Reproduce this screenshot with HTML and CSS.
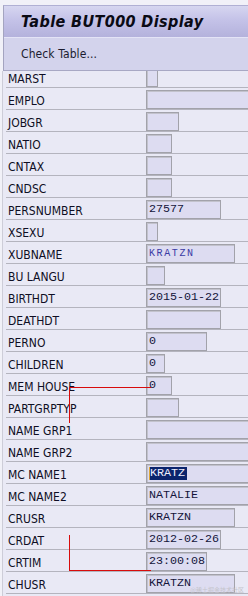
FILE: index.html
```html
<!DOCTYPE html>
<html>
  <head>
  <title>Table BUT000 Display</title>
  <link rel="stylesheet" href="styles.css">
</head>
  <body>
    <div class="screen">
      <div class="header">
        <div class="titlebar"><h1>Table BUT000 Display</h1></div>
        <div class="toolbar"><span class="tool">Check Table...</span></div>
      </div>

      <div class="form">
        <ul class="rows">
          <li class="row"><span class="label">MARST</span><span class="field w12"></span></li>
          <li class="row"><span class="label">EMPLO</span><span class="field wfull"></span></li>
          <li class="row"><span class="label">JOBGR</span><span class="field w33"></span></li>
          <li class="row"><span class="label">NATIO</span><span class="field w26"></span></li>
          <li class="row"><span class="label">CNTAX</span><span class="field w26"></span></li>
          <li class="row"><span class="label">CNDSC</span><span class="field w26"></span></li>
          <li class="row"><span class="label">PERSNUMBER</span><span class="field w75">27577</span></li>
          <li class="row"><span class="label">XSEXU</span><span class="field w12"></span></li>
          <li class="row"><span class="label">XUBNAME</span><span class="field w89 blue">KRATZN</span></li>
          <li class="row"><span class="label">BU LANGU</span><span class="field w19"></span></li>
          <li class="row"><span class="label">BIRTHDT</span><span class="field w75">2015-01-22</span></li>
          <li class="row"><span class="label">DEATHDT</span><span class="field w75"></span></li>
          <li class="row"><span class="label">PERNO</span><span class="field w61">0</span></li>
          <li class="row"><span class="label">CHILDREN</span><span class="field w19">0</span></li>
          <li class="row"><span class="label">MEM HOUSE</span><span class="field w26">0</span></li>
          <li class="row"><span class="label">PARTGRPTYP</span><span class="field w33"></span></li>
          <li class="row"><span class="label">NAME GRP1</span><span class="field wfull"></span></li>
          <li class="row"><span class="label">NAME GRP2</span><span class="field wfull"></span></li>
          <li class="row"><span class="label">MC NAME1</span><span class="field wfull"><span class="sel">KRATZ</span></span></li>
          <li class="row"><span class="label">MC NAME2</span><span class="field wfull">NATALIE</span></li>
          <li class="row"><span class="label">CRUSR</span><span class="field w89">KRATZN</span></li>
          <li class="row"><span class="label">CRDAT</span><span class="field w75">2012-02-26</span></li>
          <li class="row"><span class="label">CRTIM</span><span class="field w61">23:00:08</span></li>
          <li class="row"><span class="label">CHUSR</span><span class="field w89">KRATZN</span></li>
        </ul>
      </div>

      <!-- annotation lines drawn over the form -->
      <div class="mark mark-one"></div>
      <div class="mark mark-two"></div>
      <div class="watermark">@稀土掘金技术社区</div>
    </div>
  </body>
</html>
```

FILE: styles.css
```css
html, body{
  margin:0;
  padding:0;
}
body{
  background:#f1f1f8;
  font-family:"DejaVu Sans Condensed","DejaVu Sans",sans-serif;
  color:#14142c;
  width:248px;
  height:596px;
  overflow:hidden;
}
.screen{
  position:relative;
  padding-top:5px;
  height:591px;
  overflow:hidden;
}

.header{
  margin-left:3px;
  border-left:1px solid #a4a4c0;
  border-top:1px solid #b0b0d4;
}
.titlebar{
  height:31px;
  display:flex;
  align-items:center;
  padding-left:17px;
  background:linear-gradient(#d6d6f0,#c4c2e8 45%,#b4b2dc);
}
.titlebar h1{
  margin:0;
  font-family:"DejaVu Sans Condensed","DejaVu Sans",sans-serif;
  font-size:16px;
  font-weight:bold;
  font-style:italic;
  color:#0a0a14;
  letter-spacing:0.4px;
}
.toolbar{
  height:32px;
  display:flex;
  align-items:center;
  padding-left:17px;
  background:#d3d3ec;
  border-top:1px solid #e4e4f6;
  border-bottom:1px solid #a8a8c4;
}
.tool{
  font-size:12px;
  color:#1c1c30;
  letter-spacing:0.1px;
}

.form{
  margin-left:2px;
  border-left:1px solid #cdcdd8;
  background:#e9e9f5;
  height:526px;
  overflow:hidden;
}
.rows{
  list-style:none;
  margin:-5px 0 0 3px;
  padding:0;
}
.row{
  display:flex;
  align-items:center;
  height:21px;
  border-bottom:1px solid #b4b4be;
}
.label{
  flex:0 0 138px;
  padding-left:2px;
  margin-top:5px;
  font-size:12px;
  line-height:19px;
  color:#0e0e24;
  white-space:nowrap;
}
.field{
  align-self:flex-end;
  box-sizing:border-box;
  height:19px;
  flex:none;
  padding-left:2px;
  background:#dddcf1;
  border:1px solid #a2a2aa;
  box-shadow:inset 1px 1px 0 #c2c2cc;
  font-family:"Liberation Mono","DejaVu Sans Mono",monospace;
  font-size:11.7px;
  line-height:17px;
  color:#14143a;
  white-space:nowrap;
  overflow:hidden;
}
.w12{ width:12px; }
.w19{ width:19px; }
.w26{ width:26px; }
.w33{ width:33px; }
.w61{ width:61px; }
.w75{ width:75px; }
.w89{ width:89px; }
.wfull{ width:120px; }

.blue{
  color:#3a3aa4;
  font-size:10px;
  letter-spacing:1.6px;
}
.sel{
  display:inline-block;
  background:#0b246c;
  color:#eeeefc;
  line-height:13px;
  padding:0 2px 0 0;
  border-left:1px solid #e0a838;
}

.mark{
  position:absolute;
  border-color:#d80c0c;
  border-style:solid;
  border-width:0;
}
.mark-one{
  left:69px;
  top:387px;
  width:81px;
  height:35px;
  border-top-width:1px;
  border-left-width:1px;
}
.mark-two{
  left:69px;
  top:535px;
  width:81px;
  height:35px;
  border-bottom-width:1px;
  border-left-width:1px;
}
.watermark{
  position:absolute;
  right:4px;
  bottom:2px;
  font-family:"Noto Sans CJK SC",sans-serif;
  font-size:6px;
  color:#c4c4cc;
}
```
